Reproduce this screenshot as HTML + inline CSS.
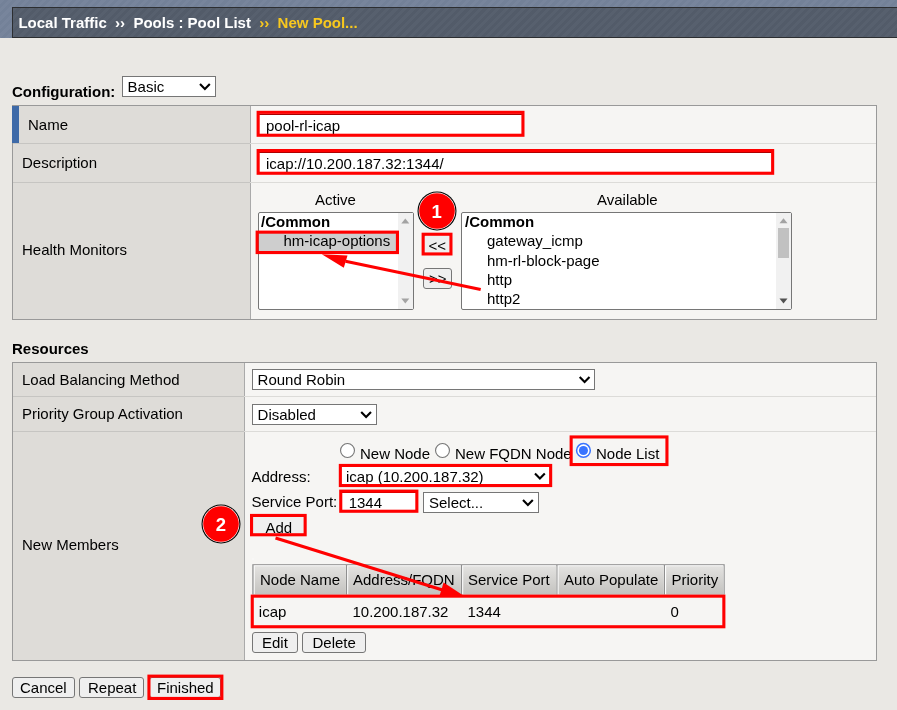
<!DOCTYPE html>
<html><head><meta charset="utf-8">
<style>
html,body{margin:0;padding:0;}
body{width:897px;height:710px;position:relative;overflow:hidden;background:#eae8e4;font-family:"Liberation Sans",sans-serif;font-size:15px;color:#000;}
.abs{position:absolute;}
.t{position:absolute;white-space:nowrap;line-height:18px;}
.b{font-weight:bold;}
#top{left:0;top:0;width:897px;height:38px;background:#75839a;background-image:repeating-linear-gradient(135deg,rgba(255,255,255,0.02) 0 3px,rgba(0,0,0,0.015) 3px 6px);}
#bar{left:12px;top:7px;width:890px;height:31px;border:1px solid #2c2e31;background:#545d6b;background-image:repeating-linear-gradient(135deg,rgba(255,255,255,0.02) 0 3px,rgba(0,0,0,0.02) 3px 6px);box-sizing:border-box;}
.tbl{border:1px solid #999;box-sizing:border-box;background:#f6f5f3;}
.lc{background:#dedcd8;border-right:1px solid #aaa;box-sizing:border-box;}
.hl{height:1px;background:#dcdbd8;}
.hll{height:1px;background:#c6c5c2;}
.inp{background:#fff;box-sizing:border-box;border-top:1px solid #a80000;}
.sel{background:#fff;box-sizing:border-box;border:1px solid #767676;border-radius:0;}
.btn{background:#efefef;box-sizing:border-box;border:1px solid #767676;border-radius:3px;text-align:center;}
.red{box-sizing:border-box;border:3px solid #f00;}
.lb{background:#fff;box-sizing:border-box;border:1px solid #767676;border-radius:2px;}
.th{position:absolute;top:0;height:30px;box-sizing:border-box;background:linear-gradient(#e4e3e1,#c9c8c5);border-left:1px solid #fff;border-right:1px solid #999;border-bottom:1px solid #999;border-top:1px solid #bbb;}
</style></head><body>
<div id="wrap" style="position:absolute;left:0;top:0;width:897px;height:710px;will-change:transform;">
<div id="top" class="abs"></div>
<div id="bar" class="abs"></div>
<div class="t b" style="left:18.400px;top:14px;color:#fff;font-size:15px;">Local Traffic &nbsp;<span>››</span>&nbsp; Pools : Pool List &nbsp;<span style="color:#f8c81e"><span>››</span>&nbsp; New Pool...</span></div>

<div class="t b" style="left:12px;top:83px;">Configuration:</div>
<div class="sel abs" style="left:122px;top:76px;width:94px;height:21px;"></div>
<div class="t" style="left:127.600px;top:78px;">Basic</div>

<!-- table 1 -->
<div class="tbl abs" style="left:12px;top:105px;width:865px;height:215px;"></div>
<div class="lc abs" style="left:13px;top:106px;width:238px;height:213px;"></div>
<div class="abs" style="left:12px;top:106px;width:7px;height:37px;background:#3e6aa8;"></div>
<div class="hl abs" style="left:13px;top:143px;width:863px;"></div><div class="hll abs" style="left:13px;top:143px;width:237px;"></div>
<div class="hl abs" style="left:13px;top:182px;width:863px;"></div><div class="hll abs" style="left:13px;top:182px;width:237px;"></div>
<div class="t" style="left:28px;top:116px;">Name</div>
<div class="t" style="left:22px;top:154px;">Description</div>
<div class="t" style="left:22px;top:241px;">Health Monitors</div>
<div class="inp abs" style="left:259px;top:114px;width:263px;height:20px;"></div>
<div class="t" style="left:266px;top:117px;">pool-rl-icap</div>
<div class="inp abs" style="left:259px;top:152px;width:513px;height:20px;"></div>
<div class="t" style="left:266px;top:155px;">icap://10.200.187.32:1344/</div>

<div class="t" style="left:315px;top:191px;">Active</div>
<div class="t" style="left:597px;top:191px;">Available</div>
<div class="lb abs" style="left:258px;top:212px;width:156px;height:98px;"></div>
<div class="abs" style="left:398px;top:213px;width:15px;height:96px;background:#f1f1f1;"></div>
<div class="lb abs" style="left:461px;top:212px;width:331px;height:98px;"></div>
<div class="abs" style="left:776px;top:213px;width:15px;height:96px;background:#f1f1f1;"></div>
<div class="abs" style="left:778px;top:228px;width:11px;height:30px;background:#c1c1c1;"></div>
<div class="t b" style="left:261px;top:213px;">/Common</div>
<div class="abs" style="left:259px;top:232px;width:139px;height:20px;background:#cecece;"></div>
<div class="t" style="left:283.500px;top:232px;">hm-icap-options</div>
<div class="t b" style="left:465px;top:213px;">/Common</div>
<div class="t" style="left:487px;top:232px;">gateway_icmp</div>
<div class="t" style="left:487px;top:252px;">hm-rl-block-page</div>
<div class="t" style="left:487px;top:271px;">http</div>
<div class="t" style="left:487px;top:290px;">http2</div>

<div class="btn abs" style="left:423px;top:234px;width:29px;height:21px;"></div>
<div class="t" style="left:428.500px;top:236.500px;">&lt;&lt;</div>
<div class="btn abs" style="left:423px;top:268px;width:29px;height:21px;"></div>
<div class="t" style="left:429px;top:270.300px;">&gt;&gt;</div>

<div class="t b" style="left:12px;top:340px;">Resources</div>
<!-- table 2 -->
<div class="tbl abs" style="left:12px;top:362px;width:865px;height:299px;"></div>
<div class="lc abs" style="left:13px;top:363px;width:232px;height:297px;"></div>
<div class="hl abs" style="left:13px;top:396px;width:863px;"></div><div class="hll abs" style="left:13px;top:396px;width:231px;"></div>
<div class="hl abs" style="left:13px;top:431px;width:863px;"></div><div class="hll abs" style="left:13px;top:431px;width:231px;"></div>
<div class="t" style="left:22px;top:371px;">Load Balancing Method</div>
<div class="t" style="left:22px;top:405px;">Priority Group Activation</div>
<div class="t" style="left:22px;top:536px;">New Members</div>
<div class="sel abs" style="left:252px;top:369px;width:343px;height:21px;"></div>
<div class="t" style="left:257.600px;top:371px;">Round Robin</div>
<div class="sel abs" style="left:252px;top:404px;width:125px;height:21px;"></div>
<div class="t" style="left:257.600px;top:406px;">Disabled</div>

<div class="t" style="left:360px;top:445px;">New Node</div>
<div class="t" style="left:455px;top:445px;">New FQDN Node</div>
<div class="t" style="left:596px;top:445px;">Node List</div>
<div class="t" style="left:251.400px;top:468px;">Address:</div>
<div class="sel abs" style="left:340px;top:465px;width:211px;height:21px;"></div>
<div class="t" style="left:346px;top:468px;">icap (10.200.187.32)</div>
<div class="t" style="left:251.400px;top:493px;">Service Port:</div>
<div class="inp abs" style="left:341px;top:492px;width:76px;height:19px;"></div>
<div class="t" style="left:348.700px;top:494px;">1344</div>
<div class="sel abs" style="left:423px;top:492px;width:116px;height:21px;"></div>
<div class="t" style="left:429px;top:494px;">Select...</div>
<div class="btn abs" style="left:251px;top:515px;width:55px;height:21px;"></div>
<div class="t" style="left:265.400px;top:519px;">Add</div>

<svg class="abs" style="left:0;top:0;" width="897" height="710" viewBox="0 0 897 710">
<defs><linearGradient id="hg" x1="0" y1="0" x2="0" y2="1"><stop offset="0" stop-color="#e3e2e0"/><stop offset="1" stop-color="#c3c2bf"/></linearGradient></defs>
<rect x="252.3" y="564.2" width="472.4" height="30.4" fill="#8f8f8f"/>
<rect x="253.6" y="565.2" width="92.3" height="29.4" fill="#fff"/>
<rect x="254.7" y="566.2" width="91.2" height="28.4" fill="url(#hg)"/>
<rect x="347.1" y="565.2" width="113.8" height="29.4" fill="#fff"/>
<rect x="348.2" y="566.2" width="112.7" height="28.4" fill="url(#hg)"/>
<rect x="462.1" y="565.2" width="94.2" height="29.4" fill="#fff"/>
<rect x="463.2" y="566.2" width="93.1" height="28.4" fill="url(#hg)"/>
<rect x="557.5" y="565.2" width="106.3" height="29.4" fill="#fff"/>
<rect x="558.6" y="566.2" width="105.2" height="28.4" fill="url(#hg)"/>
<rect x="665.0" y="565.2" width="58.5" height="29.4" fill="#fff"/>
<rect x="666.1" y="566.2" width="57.4" height="28.4" fill="url(#hg)"/>
<rect x="252.5" y="558.5" width="1" height="1" fill="#fff"/>
</svg>
<div class="t" style="left:260px;top:571px;">Node Name</div>
<div class="t" style="left:353px;top:571px;">Address/FQDN</div>
<div class="t" style="left:468px;top:571px;">Service Port</div>
<div class="t" style="left:564px;top:571px;">Auto Populate</div>
<div class="t" style="left:671.500px;top:571px;">Priority</div>
<div class="t" style="left:258.800px;top:603px;">icap</div>
<div class="t" style="left:352.500px;top:603px;">10.200.187.32</div>
<div class="t" style="left:467.500px;top:603px;">1344</div>
<div class="t" style="left:670.500px;top:603px;">0</div>
<div class="btn abs" style="left:252px;top:632px;width:46px;height:21px;"></div>
<div class="t" style="left:262px;top:634px;">Edit</div>
<div class="btn abs" style="left:302px;top:632px;width:64px;height:21px;"></div>
<div class="t" style="left:312.500px;top:634px;">Delete</div>

<div class="btn abs" style="left:12px;top:677px;width:63px;height:21px;"></div>
<div class="t" style="left:20px;top:679px;">Cancel</div>
<div class="btn abs" style="left:79px;top:677px;width:65px;height:21px;"></div>
<div class="t" style="left:88px;top:679px;">Repeat</div>
<div class="btn abs" style="left:149px;top:677px;width:72px;height:21px;"></div>
<div class="t" style="left:157px;top:679px;">Finished</div>

<svg class="abs" style="left:0;top:0;" width="897" height="710" viewBox="0 0 897 710">
<!-- red boxes -->
<g fill="none" stroke="#f00" stroke-width="3.1"><rect x="258.15" y="112.35" width="264.80" height="22.90"/><rect x="258.15" y="150.55" width="514.50" height="22.70"/><rect x="257.15" y="232.15" width="140.30" height="20.40"/><rect x="423.15" y="234.25" width="27.80" height="19.70"/><rect x="571.15" y="436.95" width="95.80" height="27.60"/><rect x="340.35" y="465.45" width="210.30" height="20.10"/><rect x="340.75" y="491.15" width="76.10" height="20.10"/><rect x="251.55" y="515.45" width="53.60" height="19.30"/><rect x="252.25" y="596.15" width="471.60" height="30.60"/><rect x="148.95" y="676.15" width="72.90" height="22.30"/></g>
<!-- arrows -->
<line x1="480.700" y1="289.500" x2="345.500" y2="261.300" stroke="#f00" stroke-width="3.200"/>
<polygon points="321.800,254.300 347.500,255.500 343.800,267.700" fill="#f00"/>
<line x1="275.500" y1="538" x2="442.500" y2="590" stroke="#f00" stroke-width="3.200"/>
<polygon points="465.600,596.900 443.600,582.600 439.700,595.200" fill="#f00"/>
<!-- circles -->
<g>
<circle cx="437" cy="211" r="19.5" fill="#000"/><circle cx="437" cy="211" r="18.400" fill="#fff"/><circle cx="437" cy="211" r="17.800" fill="#f00"/>
<circle cx="221" cy="524" r="19.5" fill="#000"/><circle cx="221" cy="524" r="18.400" fill="#fff"/><circle cx="221" cy="524" r="17.800" fill="#f00"/>
</g>
<text x="436.700" y="217.500" text-anchor="middle" font-family="Liberation Sans" font-weight="bold" font-size="18.500" fill="#fff">1</text>
<text x="221" y="531" text-anchor="middle" font-family="Liberation Sans" font-weight="bold" font-size="18.500" fill="#fff">2</text>
<!-- select chevrons -->
<g fill="none" stroke="#000" stroke-width="2.1">
<path d="M200,84 l4.900,5 l4.900,-5"/>
<path d="M579.700,377 l4.900,5 l4.900,-5"/>
<path d="M361.200,412 l4.900,5 l4.900,-5"/>
<path d="M535,473.500 l4.900,5 l4.900,-5"/>
<path d="M523,500 l4.900,5 l4.900,-5"/>
</g>
<!-- radios -->
<circle cx="347.500" cy="450.500" r="6.950" fill="#fff" stroke="#767676" stroke-width="1.100"/>
<circle cx="442.500" cy="450.500" r="6.950" fill="#fff" stroke="#767676" stroke-width="1.100"/>
<circle cx="583.450" cy="450.450" r="6.850" fill="#fff" stroke="#3874ff" stroke-width="1.500"/>
<circle cx="583.450" cy="450.450" r="4.550" fill="#3874ff"/>
<!-- scroll arrows -->
<g fill="#a3a3a3"><polygon points="401.300,223.500 409.300,223.500 405.300,218.500"/><polygon points="401.300,298.500 409.300,298.500 405.300,303.500"/><polygon points="779.500,223.300 787.500,223.300 783.500,218.300"/></g>
<polygon points="779.500,298.500 787.500,298.500 783.500,303.500" fill="#505050"/>
</svg>
</div>
</body></html>
